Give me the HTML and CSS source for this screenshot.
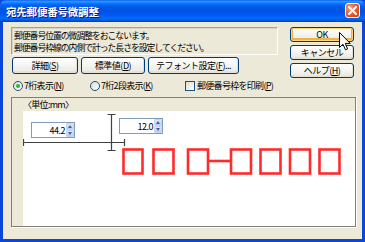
FILE: index.html
```html
<!DOCTYPE html>
<html lang="ja">
<head>
<meta charset="utf-8">
<link rel="stylesheet" href="styles.css">
</head>
<body>
<div class="win">
  <div class="titlebar">
    <span class="title">宛先郵便番号微調整</span>
    <span class="close"><svg width="9" height="9" viewBox="0 0 9 9"><path d="M1 1L8 8M8 1L1 8" stroke="#fff" stroke-width="2" stroke-linecap="square"/></svg></span>
  </div>
  <div class="body">
    <div class="left">
      <div class="info">
        <p>郵便番号位置の微調整をおこないます。</p>
        <p>郵便番号枠線の内側で計った長さを設定してください。</p>
      </div>
      <div class="btnrow">
        <button class="btn b1">詳細(<u>S</u>)</button>
        <button class="btn b2">標準値(<u>D</u>)</button>
        <button class="btn b3">テフォント設定(<u>F</u>)...</button>
      </div>
      <div class="opts">
        <label class="opt o1"><span class="radio on"></span>7桁表示(<u>N</u>)</label>
        <label class="opt o2"><span class="radio"></span>7桁2段表示(<u>K</u>)</label>
        <label class="opt o3"><span class="check"></span>郵便番号枠を印刷(<u>P</u>)</label>
      </div>
    </div>
    <div class="right">
      <button class="btn rb ok">OK</button>
      <button class="btn rb">キャンセル</button>
      <button class="btn rb">ヘルプ(<u>H</u>)</button>
    </div>
    <div class="panel">
      <div class="unit">〈単位:mm〉</div>
      <div class="canvas">
        <svg class="drawing" width="331" height="114" viewBox="0 0 331 114">
          <g stroke="#404040" stroke-width="1.2" fill="none">
            <path d="M0.5 31.5H101.5M0.5 28V35M101.5 28V35"/>
            <path d="M88.5 3V39M84.5 3.5H92.5M84.5 39.5H92.5"/>
          </g>
          <g stroke="#ff2b2b" stroke-width="2.6" fill="none">
            <rect x="100.5" y="38.5" width="19" height="24"/>
            <rect x="130.5" y="38.5" width="20" height="24"/>
            <rect x="165" y="38.5" width="20" height="24"/>
            <path d="M185 50H208"/>
            <rect x="208" y="38.5" width="20" height="24"/>
            <rect x="237.5" y="38.5" width="20" height="24"/>
            <rect x="267" y="38.5" width="20" height="24"/>
            <rect x="296.5" y="38.5" width="20" height="24"/>
          </g>
        </svg>
        <div class="spin s1"><span class="val">44.2</span><span class="arrows"><i class="up"></i><i class="dn"></i></span></div>
        <div class="spin s2"><span class="val">12.0</span><span class="arrows"><i class="up"></i><i class="dn"></i></span></div>
      </div>
    </div>
  </div>
  <svg class="cursor" width="12" height="19" viewBox="0 0 12 19"><path d="M0.5 0.5V15.5L4 12.2L6.4 17.8L8.6 16.9L6.3 11.4H11.2Z" fill="#fff" stroke="#000" stroke-width="1"/></svg>
</div>
</body>
</html>
```
FILE: styles.css
```css
* { box-sizing: border-box; }
html, body { margin: 0; padding: 0; }
body { width: 365px; height: 242px; overflow: hidden; background: #0a46d8; }
.win {
  position: relative;
  width: 365px; height: 242px;
  display: flex; flex-direction: column;
  font-family: "Noto Sans CJK JP", "Noto Sans", sans-serif;
  color: #000;
}
.titlebar {
  height: 22px; flex: none;
  display: flex; align-items: center; justify-content: space-between;
  padding: 0 5px 0 6px;
  border-radius: 6px 6px 0 0;
  background: linear-gradient(to bottom, #0058ee 0%, #3593ff 5%, #288eff 9%, #127dff 14%, #036ffc 18%, #0262ee 25%, #0057e5 35%, #0054e3 45%, #0055eb 60%, #005bf5 70%, #026afe 80%, #0062ef 88%, #0052d6 94%, #0040ab 100%);
}
.title {
  color: #fff; font-weight: bold; font-size: 10.5px; letter-spacing: -0.2px;
  text-shadow: 1px 1px 0 #0a1883;
}
.close {
  width: 15px; height: 15px; margin-top: -1px;
  display: flex; align-items: center; justify-content: center;
  border: 1px solid #fff; border-radius: 3px;
  background: radial-gradient(circle at 30% 30%, #f29a7a 0%, #e3582b 55%, #c8431c 100%);
}
.body {
  flex: 1;
  margin: 0 3px 3px 3px;
  background: #ece9d8;
  display: grid;
  grid-template-columns: 267px 64px;
  grid-template-rows: 70px 1fr;
  column-gap: 12px;
  padding: 5px 0 0 8px;
}
.left { display: flex; flex-direction: column; }
.info {
  height: 28px;
  border: 1px solid; border-color: #a5a294 #fff #fff #a5a294;
  box-shadow: inset 1px 1px 0 #d8d4c4;
  padding: 2px 0 0 2px;
}
.info p { margin: 0; font-size: 8.8px; line-height: 12px; letter-spacing: -1px; white-space: nowrap; }
.btn {
  font-family: inherit; font-size: 9px; letter-spacing: -0.5px; color: #000;
  height: 17px; padding: 0;
  border: 1px solid #003c74; border-radius: 3px;
  background: linear-gradient(to bottom, #fff 0%, #f4f4f0 50%, #ecebe6 85%, #d6d0c5 100%);
  box-shadow: inset -1px -1px 0 #e3e0d4;
  white-space: nowrap;
}
.btn u { text-decoration: underline; }
.btnrow { display: flex; gap: 3px; margin: 2px 0 0 1px; }
.b1 { width: 66px; }
.b2 { width: 64px; }
.b3 { width: 91px; }
.opts { display: flex; align-items: center; height: 13px; margin-top: 5px; font-size: 9px; letter-spacing: -0.7px; }
.opt { display: flex; align-items: center; white-space: nowrap; }
.o1 { margin-left: 2px; width: 77px; }
.o2 { width: 95px; }
.radio {
  width: 10px; height: 10px; border-radius: 50%;
  border: 1px solid #1c5180; background: linear-gradient(135deg, #dcdcd6, #fff);
  margin-right: 1px; position: relative; flex: none;
}
.radio.on::after {
  content: ""; position: absolute; left: 2px; top: 2px; width: 4px; height: 4px; border-radius: 50%;
  background: #31b631;
}
.check {
  width: 10px; height: 10px; border: 1px solid #1c5180;
  background: linear-gradient(135deg, #dcdcd6, #fff);
  margin-right: 2px; flex: none;
}
.right { display: flex; flex-direction: column; gap: 3px; }
.rb { width: 64px; height: 15px; }
.ok { box-shadow: inset 0 0 0 1px #fbd77d, inset 0 -1px 0 2px #f2b24a; }
.panel {
  grid-column: 1 / 3;
  width: 345px; height: 130px;
  margin-top: 0;
  border: 1px solid #7f7f78;
  box-shadow: 1px 1px 0 #fff;
  padding-left: 11px;
  display: flex; flex-direction: column;
}
.unit { height: 13px; font-size: 9px; letter-spacing: -0.7px; line-height: 13px; padding-left: 0; }
.canvas { position: relative; flex: 1; background: #fff; }
.drawing { display: block; }
.spin {
  position: absolute; width: 44px; height: 16px;
  border: 1px solid #7f9db9; background: #fff;
  display: flex; align-items: center; justify-content: flex-end;
  font-size: 9px; letter-spacing: -0.5px;
}
.s1 { left: 8px; top: 11px; }
.s2 { left: 96px; top: 7px; }
.val { margin-right: 1px; }
.arrows { width: 8px; height: 14px; display: flex; flex-direction: column; gap: 0; margin-right: 0; }
.arrows i {
  flex: 1; position: relative; display: block;
  background: linear-gradient(to bottom, #dde8fc, #b9cdf7);
  border: 1px solid #c4d3f3; border-radius: 1px;
}
.arrows i::after {
  content: ""; position: absolute; left: 1px; top: 1px;
  width: 0; height: 0; border-left: 2px solid transparent; border-right: 2px solid transparent;
}
.arrows .up::after { border-bottom: 3px solid #4d6185; }
.arrows .dn::after { border-top: 3px solid #4d6185; }
.cursor { position: absolute; left: 339px; top: 32px; }
```
